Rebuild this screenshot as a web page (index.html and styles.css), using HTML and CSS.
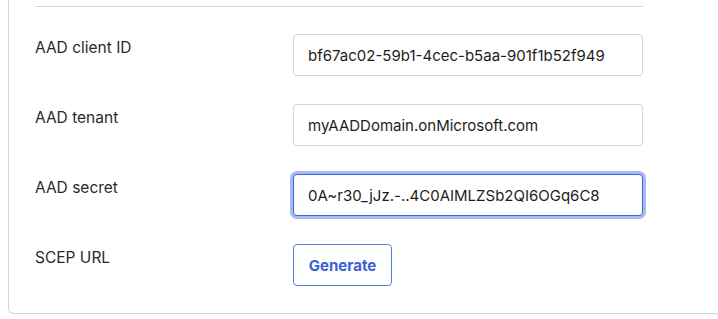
FILE: index.html
```html
<!DOCTYPE html>
<html>
<head>
<meta charset="utf-8">
<link rel="stylesheet" href="styles.css">
</head>
<body>
<div class="card">
  <hr class="sep">
  <div class="form">
    <div class="row">
      <label class="label">AAD client ID</label>
      <input class="field" type="text" value="bf67ac02-59b1-4cec-b5aa-901f1b52f949">
    </div>
    <div class="row">
      <label class="label">AAD tenant</label>
      <input class="field" type="text" value="myAADDomain.onMicrosoft.com">
    </div>
    <div class="row">
      <label class="label">AAD secret</label>
      <input class="field focused" type="text" value="0A~r30_jJz.-..4C0AIMLZSb2QI6OGq6C8">
    </div>
    <div class="row">
      <label class="label">SCEP URL</label>
      <div><button class="btn" type="button">Generate</button></div>
    </div>
  </div>
</div>
</body>
</html>
```

FILE: styles.css
```css
html, body {
  margin: 0;
  padding: 0;
  background: #fff;
  overflow: hidden;
}
body {
  font-family: Inter, "Noto Sans", "Liberation Sans", sans-serif;
  color: #222;
}
.card {
  margin-left: 8px;
  margin-right: -20px;
  border: 1px solid #d4d4d4;
  border-top: 0;
  border-radius: 0 0 6px 6px;
  padding: 6px 0 27px 26px;
  height: 280px;
}
.sep {
  margin: 0;
  border: 0;
  border-top: 1px solid #d9d9d9;
  width: 608px;
}
.form {
  margin-top: 27px;
  display: flex;
  flex-direction: column;
  gap: 28px;
}
.row {
  display: grid;
  grid-template-columns: 258px 350px;
  align-items: start;
}
.label {
  font-size: 15.5px;
  line-height: 20px;
  padding-top: 4px;
  color: #2a2a2a;
}
.field {
  box-sizing: border-box;
  width: 350px;
  height: 42px;
  border: 1px solid #d3d3d3;
  border-radius: 4px;
  padding: 0 14px;
  font-family: Inter, "Noto Sans", "Liberation Sans", sans-serif;
  font-size: 15px;
  color: #1d1d1d;
  background: #fff;
  outline: none;
}
.field.focused {
  border-color: #3d64d8;
  box-shadow: 0 0 0 3px #aab9ef;
}
.btn {
  box-sizing: border-box;
  width: 99px;
  height: 42px;
  border: 1px solid #5a7ddf;
  border-radius: 4px;
  background: #fff;
  color: #3a60d6;
  font-family: Inter, "Noto Sans", "Liberation Sans", sans-serif;
  font-weight: 700;
  font-size: 15px;
  padding: 0;
}
```
